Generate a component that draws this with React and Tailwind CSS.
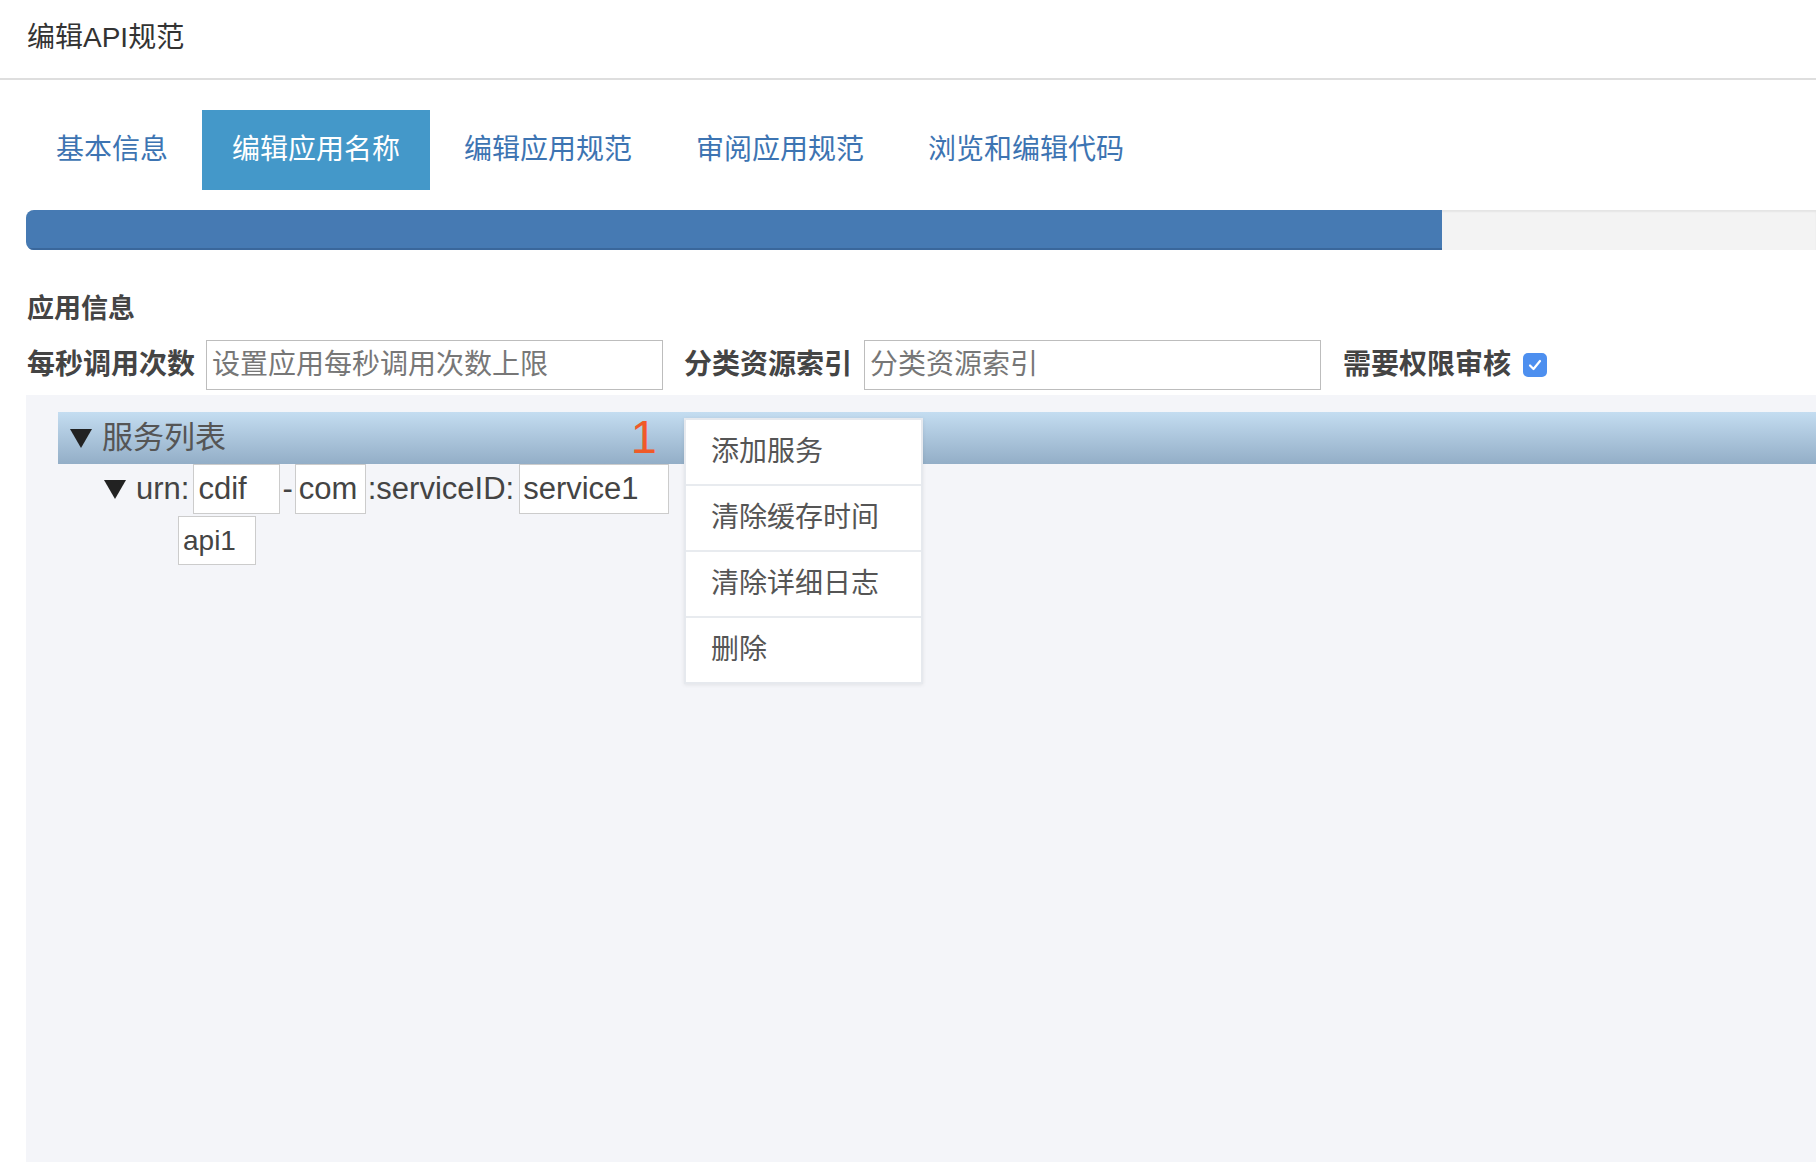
import React from 'react'

const tabs = ['基本信息', '编辑应用名称', '编辑应用规范', '审阅应用规范', '浏览和编辑代码']
const menuItems = ['添加服务', '清除缓存时间', '清除详细日志', '删除']

function Triangle({ className }) {
  return (
    <svg className={className} width="24" height="21" viewBox="0 0 24 21">
      <polygon points="1,1 23,1 12,20" fill="#222" />
    </svg>
  )
}

export default function App() {
  return (
    <div className="flex h-screen flex-col overflow-hidden bg-white font-['Liberation_Sans','Noto_Sans_CJK_SC',sans-serif]">
      {/* header */}
      <div className="flex h-[80px] shrink-0 items-center border-b-2 border-[#dedede] px-[27px] pb-[2px]">
        <h1 className="text-[28px] text-[#333]">编辑API规范</h1>
      </div>

      {/* tabs */}
      <div className="mt-[30px] flex gap-[4px] pl-[26px]">
        {tabs.map((tab, i) => (
          <div
            key={tab}
            className={
              i === 1
                ? 'flex h-[80px] items-center bg-[#4498c9] px-[30px] text-[28px] text-white'
                : 'flex h-[80px] items-center px-[30px] text-[28px] text-[#3d74b2]'
            }
          >
            {tab}
          </div>
        ))}
      </div>

      {/* progress */}
      <div className="ml-[26px] mt-[20px] flex h-[40px] shrink-0 overflow-hidden rounded-l-[8px] bg-[#f3f3f3] shadow-[inset_0_2px_2px_rgba(0,0,0,0.06)]">
        <div className="w-[1416px] border-b-2 border-[#3a679b] bg-[#467ab3]" />
      </div>

      {/* app info */}
      <div className="mt-[45px] pl-[27px] text-[27px] font-bold leading-[28px] text-[#444]">应用信息</div>
      <div className="mt-[17px] flex h-[50px] items-center pl-[27px] text-[#444]">
        <span className="text-[28px] font-bold">每秒调用次数</span>
        <input
          className="ml-[11px] h-[50px] w-[457px] border border-[#bdbdbd] px-[5px] text-[28px] placeholder:text-[#777] outline-none"
          placeholder="设置应用每秒调用次数上限"
        />
        <span className="ml-[21px] text-[28px] font-bold">分类资源索引</span>
        <input
          className="ml-[12px] h-[50px] w-[457px] border border-[#bdbdbd] px-[5px] text-[28px] placeholder:text-[#777] outline-none"
          placeholder="分类资源索引"
        />
        <span className="ml-[22px] text-[28px] font-bold">需要权限审核</span>
        <span className="ml-[12px] flex h-[24px] w-[24px] items-center justify-center rounded-[5px] bg-[#4d8fef]">
          <svg width="16" height="16" viewBox="0 0 16 16">
            <path d="M3 8.5 L6.5 12 L13 4" stroke="white" strokeWidth="2.2" fill="none" strokeLinecap="round" strokeLinejoin="round" />
          </svg>
        </span>
      </div>

      {/* service tree */}
      <div className="relative ml-[26px] mt-[5px] flex-1 bg-[#f4f5f9] pl-[32px] pt-[17px]">
        <div className="flex h-[52px] items-center bg-gradient-to-b from-[#c4ddf1] to-[#93aec7] pl-[11px]">
          <div className="flex w-[588px] items-center justify-between">
            <div className="flex items-center">
              <Triangle />
              <span className="ml-[9px] text-[31px] text-[#555]">服务列表</span>
            </div>
            <span className="mb-[4px] text-[47px] font-light leading-none text-[#f05a28]">1</span>
          </div>
        </div>

        <div className="flex h-[50px] items-center pl-[45px] text-[31px] text-[#444]">
          <Triangle />
          <span className="ml-[9px]">urn:</span>
          <input className="ml-[4px] h-[50px] w-[87px] border border-[#ccc] bg-white px-[4px] text-[31px] text-[#444] outline-none" defaultValue="cdif" />
          <span className="mx-[2px]">-</span>
          <input className="h-[50px] w-[71px] border border-[#ccc] bg-white px-[3px] text-[31px] text-[#444] outline-none" defaultValue="com" />
          <span className="ml-[2px]">:serviceID:</span>
          <input className="ml-[5px] h-[50px] w-[150px] border border-[#ccc] bg-white px-[3px] text-[31px] text-[#444] outline-none" defaultValue="service1" />
        </div>

        <div className="mt-[2px] pl-[120px]">
          <input className="h-[49px] w-[78px] border border-[#ccc] bg-white px-[4px] text-[28px] text-[#444] outline-none" defaultValue="api1" />
        </div>

        {/* context menu */}
        <div className="absolute left-[658px] top-[23px] w-[239px] border-2 border-[#e6e9ee] bg-white shadow-[0_1px_4px_rgba(0,0,0,0.08)]">
          {menuItems.map((item, i) => (
            <div
              key={item}
              className={
                i === 0
                  ? 'flex h-[64px] items-center pl-[25px] text-[28px] text-[#555]'
                  : 'flex h-[66px] items-center border-t-2 border-[#e8ebef] pl-[25px] text-[28px] text-[#555]'
              }
            >
              {item}
            </div>
          ))}
        </div>
      </div>
    </div>
  )
}
